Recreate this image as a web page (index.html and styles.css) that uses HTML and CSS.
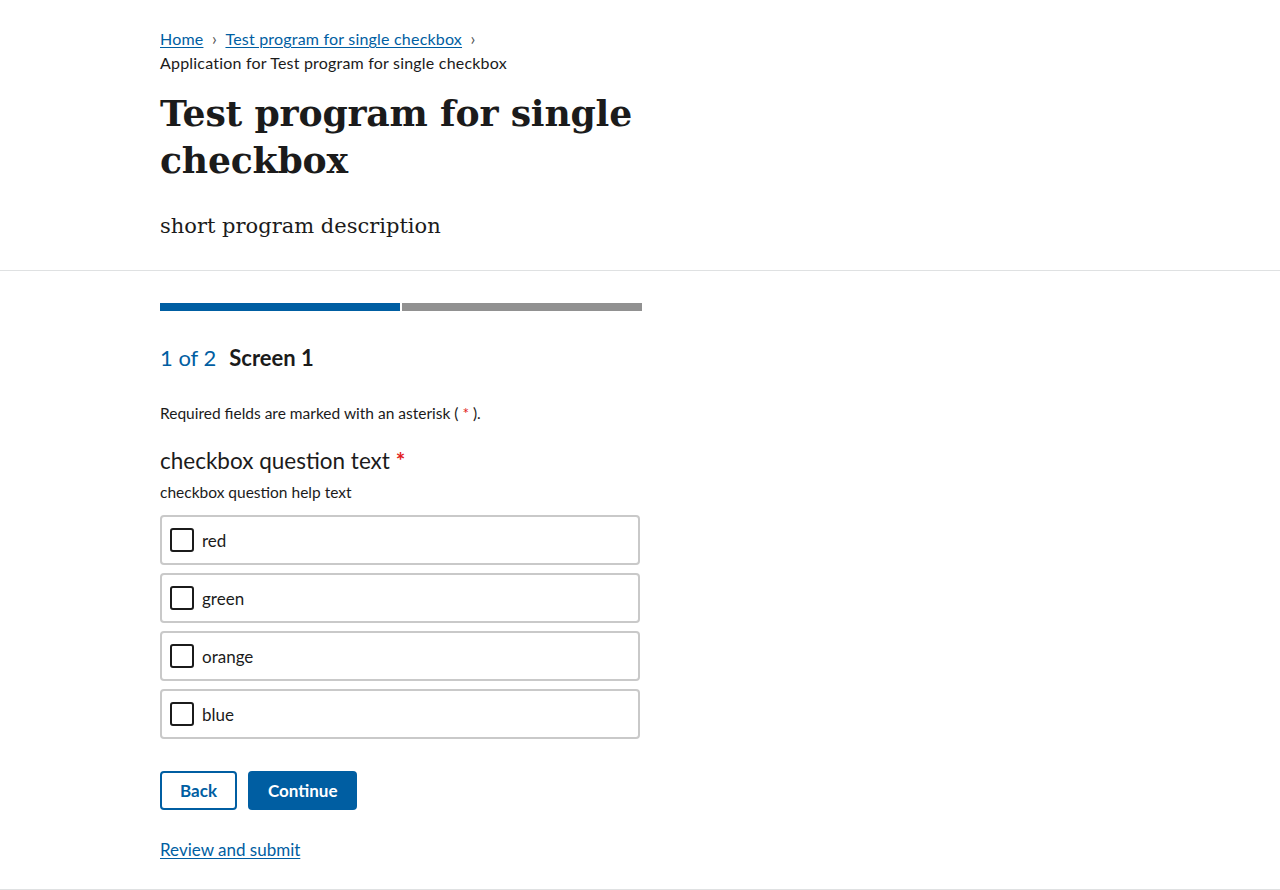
FILE: index.html
```html
<!DOCTYPE html>
<html lang="en">
<head>
<meta charset="utf-8">
<title>Test program for single checkbox</title>
<link rel="stylesheet" href="styles.css">
</head>
<body>
<header class="intro">
  <div class="wrap wide">
    <nav class="crumbs">
      <a href="#">Home</a><span class="sep">&#8250;</span><a href="#">Test program for single checkbox</a><span class="sep">&#8250;</span>
      <div class="current">Application for Test program for single checkbox</div>
    </nav>
    <h1 class="title">Test program for single checkbox</h1>
    <p class="desc">short program description</p>
  </div>
</header>
<main class="wrap main">
  <div class="progress"><div class="seg done"></div><div class="seg todo"></div></div>
  <h2 class="step"><span class="count">1 of 2</span><span class="name">Screen 1</span></h2>
  <p class="req">Required fields are marked with an asterisk ( <span class="star">*</span> ).</p>
  <fieldset class="question">
    <legend class="qlabel">checkbox question text <span class="star">*</span></legend>
    <p class="help">checkbox question help text</p>
    <label class="tile"><span class="box"></span>red</label>
    <label class="tile"><span class="box"></span>green</label>
    <label class="tile"><span class="box"></span>orange</label>
    <label class="tile"><span class="box"></span>blue</label>
  </fieldset>
  <div class="actions">
    <button class="btn outline">Back</button>
    <button class="btn solid">Continue</button>
  </div>
  <a class="review" href="#">Review and submit</a>
</main>
<div class="footline"></div>
</body>
</html>
```
FILE: styles.css
```css
html, body { margin: 0; padding: 0; background: #fff; }
body { font-family: "Source Sans Pro", Lato, "Liberation Sans", sans-serif; color: #1b1b1b; }
.wrap { width: 480px; margin-left: 160px; }
.wrap.wide { width: 560px; }
.intro { border-bottom: 1px solid #dfe1e2; padding-top: 27px; padding-bottom: 29px; }
.crumbs { font-size: 16px; line-height: 24px; letter-spacing: 0.2px; }
.crumbs a { color: #005ea2; text-decoration: underline; text-underline-offset: 2px; }
.crumbs .sep { color: #555; display: inline-block; width: 22px; text-align: center; font-size: 17px; }
.current { color: #1b1b1b; }
.title { font-family: "DejaVu Serif", "Liberation Serif", serif; font-weight: 700; font-size: 36.2px; line-height: 47px; margin: 15px 0 0; letter-spacing: -0.2px; }
.desc { font-family: "DejaVu Serif", "Liberation Serif", serif; font-size: 21px; line-height: 30px; margin: 27px 0 0; }
.main { padding-top: 32px; }
.progress { display: flex; gap: 2px; width: 482px; }
.seg { height: 8px; flex: 1; }
.done { background: #005ea2; }
.todo { background: #919191; }
.step { margin: 32px 0 0; font-size: 22px; line-height: 30px; font-weight: 400; display: flex; gap: 13px; }
.count { color: #005ea2; }
.name { font-weight: 700; }
.req { font-size: 15.5px; line-height: 22px; margin: 29px 0 0; }
.star { color: #e21c21; }
.question { border: 0; margin: 22px 0 0; padding: 0; }
.qlabel { font-size: 22.5px; line-height: 30px; padding: 0; }
.qlabel .star { font-weight: 700; }
.help { font-size: 15.5px; line-height: 22px; margin: 5px 0 12px; }
.tile { display: flex; align-items: center; height: 46px; border: 2px solid #c9c9c9; border-radius: 4px; padding-left: 8px; font-size: 17px; margin-bottom: 8px; }
.box { width: 20px; height: 20px; border: 2px solid #1b1b1b; border-radius: 3px; margin-right: 8px; }
.actions { display: flex; gap: 11px; margin-top: 24px; }
.btn { font-family: inherit; font-weight: 700; font-size: 17px; height: 39px; border-radius: 4px; padding: 0 18px; cursor: pointer; }
.outline { background: #fff; border: 2px solid #005ea2; color: #005ea2; }
.solid { background: #005ea2; border: 0; color: #fff; padding: 0 20px; }
.review { display: inline-block; margin-top: 28px; color: #005ea2; font-size: 17px; line-height: 24px; text-underline-offset: 2px; }
.footline { margin-top: 27px; border-top: 1px solid #dfe1e2; }
```
